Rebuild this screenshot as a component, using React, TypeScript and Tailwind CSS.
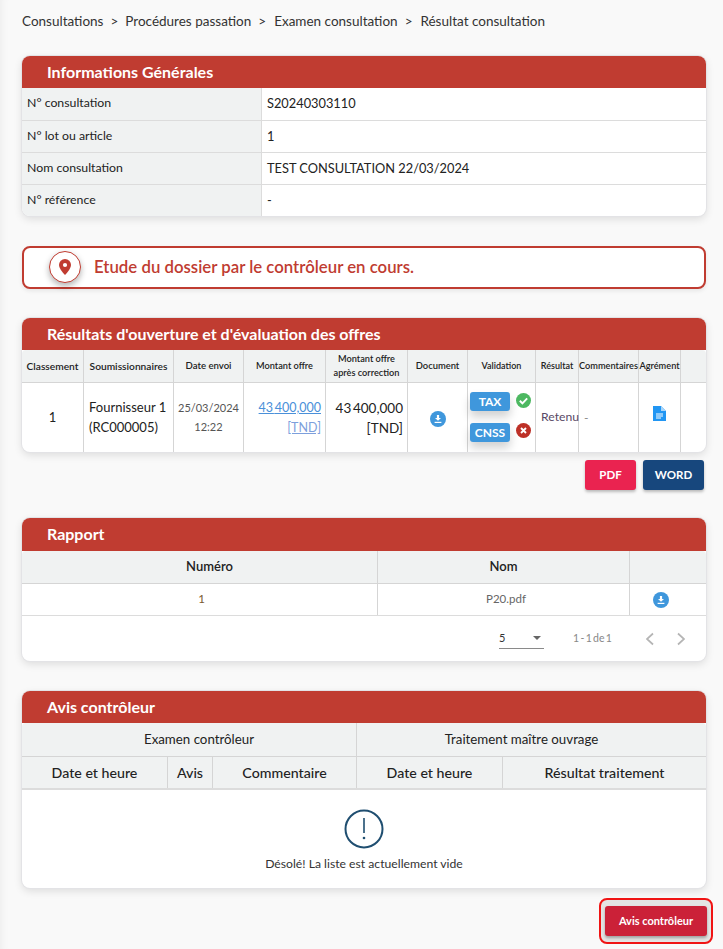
import React from "react";

const font = { fontFamily: "Lato, 'Open Sans', sans-serif" };

function Card({ title, children, className = "", headerClass = "h-[32px]" }: { title: string; children: React.ReactNode; className?: string; headerClass?: string }) {
  return (
    <section className={`rounded-lg bg-white shadow-[0_0_0_1px_#e3e3e6,0_3px_8px_rgba(0,0,0,0.12)] overflow-hidden ${className}`}>
      <h2 className={`${headerClass} bg-[#c03c31] pl-[25px] text-[16px] leading-[32px] font-bold text-white`}>{title}</h2>
      {children}
    </section>
  );
}

function DownloadIcon() {
  return (
    <svg width="16" height="16" viewBox="0 0 16 16" className="inline-block">
      <circle cx="8" cy="8" r="8" fill="#3f97dc" />
      <path d="M6.9 4h2.2v3h1.9L8 9.8 5 7h1.9z" fill="#fff" />
      <rect x="4.6" y="10.8" width="6.8" height="1.2" fill="#fff" />
    </svg>
  );
}

function InfoRow({ label, value, first }: { label: string; value: string; first?: boolean }) {
  return (
    <div className={`grid grid-cols-[240px_1fr] ${first ? "h-[32px]" : "h-[32px] border-t border-[#dcdcdc]"}`}>
      <div className="bg-[#f0f2f2] border-r border-[#dcdcdc] pl-[5px] text-[12.3px] leading-[30px] text-[#222]">{label}</div>
      <div className="pl-[5px] text-[12.8px] leading-[30px] text-[#222]">{value}</div>
    </div>
  );
}

const offerHeaders: [string, number, string][] = [
  ["Classement", 62, "text-[10.2px]"],
  ["Soumissionnaires", 90, "text-[10.2px]"],
  ["Date envoi", 70, "text-[9.6px]"],
  ["Montant offre", 82, "text-[9.2px]"],
  ["Montant offre\naprès correction", 82, "text-[9.2px]"],
  ["Document", 60, "text-[9.4px]"],
  ["Validation", 68, "text-[9px]"],
  ["Résultat", 43, "text-[9px]"],
  ["Commentaires", 60, "text-[9.2px]"],
  ["Agrément", 42, "text-[9.2px]"],
  ["", 25, "text-[9px]"],
];

const cell = "border-r border-[#d5d5d5] h-[69px] text-center";

export default function App() {
  return (
    <div style={font} className="w-[723px] h-[949px] overflow-hidden bg-[#f9f9f9] pl-[22px] pr-[17px] text-[#222] shadow-[inset_10px_0_8px_-8px_rgba(0,0,0,0.05)]">
      <nav className="h-[56px] pt-[13px] text-[13.5px] leading-[17px] text-[#333] flex gap-[7px]">
        <span>Consultations</span><span>&gt;</span><span>Procédures passation</span><span>&gt;</span>
        <span className="ml-[1px]">Examen consultation</span><span>&gt;</span><span className="ml-[1px]">Résultat consultation</span>
      </nav>

      <Card title="Informations Générales">
        <InfoRow first label="N° consultation" value="S20240303110" />
        <InfoRow label="N° lot ou article" value="1" />
        <InfoRow label="Nom consultation" value="TEST CONSULTATION 22/03/2024" />
        <InfoRow label="N° référence" value="-" />
      </Card>

      <div className="mt-[30px] h-[43px] pb-[1px] rounded-lg border-2 border-[#c03c31] bg-white flex items-center pl-[25px] gap-[13px] shadow-[0_2px_4px_rgba(0,0,0,0.08)]">
        <span className="w-[32px] h-[32px] rounded-full bg-white border border-[#c03c31] shadow-[0_3px_6px_rgba(0,0,0,0.3)] flex items-center justify-center">
          <svg width="12" height="16" viewBox="0 0 12 16">
            <path d="M6 0a6 6 0 0 0-6 6c0 4 6 10 6 10s6-6 6-10a6 6 0 0 0-6-6z" fill="#c03c31" />
            <circle cx="6" cy="6" r="2.1" fill="#fff" />
          </svg>
        </span>
        <span className="text-[16.8px] font-semibold text-[#c03c31]">Etude du dossier par le contrôleur en cours.</span>
      </div>

      <Card title="Résultats d'ouverture et d'évaluation des offres" className="mt-[29px]">
        <table className="table-fixed w-full border-separate border-spacing-0">
          <colgroup>
            {offerHeaders.map(([h, w], i) => <col key={i} style={{ width: w }} />)}
          </colgroup>
          <thead>
            <tr>
              {offerHeaders.map(([h, , size], i) => (
                <th key={i} className={`h-[33px] bg-[#f0f2f2] border-b border-[#d5d5d5] first:rounded-tl-[4px] last:rounded-tr-[4px] leading-[14px] font-semibold text-[#222] whitespace-pre-line ${size} ${i < 10 ? "border-r" : ""}`}>
                  {h}
                </th>
              ))}
            </tr>
          </thead>
          <tbody>
            <tr>
              <td className={`${cell} text-[13px]`}>1</td>
              <td className={`${cell} !text-left pl-[5px] pb-[2px] text-[13px] leading-[20px]`}>Fournisseur 1<br />(RC000005)</td>
              <td className={`${cell} pb-[2px] text-[11px] leading-[19px] text-[#555]`}>25/03/2024<br />12:22</td>
              <td className={`${cell} !text-right pr-[4px] text-[12.5px] leading-[20px] text-[#4a90d9]`}><span className="underline">43{"\u2009"}400,000</span><br /><span className="underline text-[#7d9fdc]">[TND]</span></td>
              <td className={`${cell} !text-right pr-[4px] text-[13.5px] leading-[20px]`}>43{"\u2009"}400,000<br />[TND]</td>
              <td className={cell}><DownloadIcon /></td>
              <td className={`${cell} !text-left`}>
                <div className="-translate-y-[1px]">
                  <div className="flex items-center pl-[2px] h-[31px] gap-[6px]">
                    <span className="w-[40px] h-[19px] rounded-[3px] bg-[#3f97dc] text-white text-[12px] font-bold leading-[19px] text-center shadow-[0_6px_10px_rgba(0,0,0,0.18)]">TAX</span>
                    <svg width="15" height="15" viewBox="0 0 15 15" className="-mt-[2px]"><circle cx="7.5" cy="7.5" r="7.5" fill="#4cb861" /><path d="M3.8 7.8l2.6 2.5 4.8-5" stroke="#fff" strokeWidth="1.9" fill="none" /></svg>
                  </div>
                  <div className="flex items-center pl-[2px] h-[31px] gap-[6px]">
                    <span className="w-[40px] h-[19px] rounded-[3px] bg-[#3f97dc] text-white text-[12px] font-bold leading-[19px] text-center shadow-[0_6px_10px_rgba(0,0,0,0.18)]">CNSS</span>
                    <svg width="15" height="15" viewBox="0 0 15 15" className="-mt-[4px]"><circle cx="7.5" cy="7.5" r="7.5" fill="#bd3027" /><path d="M5 5l5 5M10 5l-5 5" stroke="#fff" strokeWidth="1.9" fill="none" /></svg>
                  </div>
                </div>
              </td>
              <td className={`${cell} !text-left pl-[5px] text-[12.2px] text-[#5a4a66] whitespace-nowrap`}>Retenu</td>
              <td className={`${cell} !text-left pl-[5px] text-[12px] text-[#888]`}>-</td>
              <td className={cell}>
                <svg width="13" height="15" viewBox="0 0 13 15" className="block mx-auto -translate-y-[4px]">
                  <path d="M0 0h8l5 5v10H0z" fill="#2196f3" />
                  <path d="M8 0l5 5H8z" fill="#a9d6fa" />
                  <path d="M3 8h7M3 10h7M3 12h5" stroke="#fff" strokeWidth="1" />
                </svg>
              </td>
              <td className="h-[69px]"></td>
            </tr>
          </tbody>
        </table>
      </Card>

      <div className="mt-[8px] mr-[2px] flex justify-end gap-[7px]">
        <button className="w-[51px] h-[30px] rounded-[3px] bg-[#ea2350] text-white text-[11.5px] font-bold shadow-[0_2px_3px_rgba(0,0,0,0.25)]">PDF</button>
        <button className="w-[61px] h-[30px] rounded-[3px] bg-[#17477d] text-white text-[11.5px] font-bold shadow-[0_2px_3px_rgba(0,0,0,0.25)]">WORD</button>
      </div>

      <Card title="Rapport" className="mt-[28px]" headerClass="h-[33px]">
        <div className="grid grid-cols-[356px_252px_1fr] h-[33px] rounded-t-[4px] bg-[#f0f2f2] border-b border-[#d5d5d5] text-[13px] leading-[31px] font-semibold text-center">
          <div className="border-r border-[#d5d5d5] pl-[20px]">Numéro</div>
          <div className="border-r border-[#d5d5d5]">Nom</div>
          <div></div>
        </div>
        <div className="grid grid-cols-[356px_252px_1fr] h-[32px] border-b border-[#dcdcdc] text-[11.5px] leading-[30px] text-center text-[#7a5a30]">
          <div className="border-r border-[#d5d5d5] pl-[4px]">1</div>
          <div className="border-r border-[#d5d5d5] pl-[5px] text-[#666]">P20.pdf</div>
          <div className="flex items-center justify-center pr-[15px]"><DownloadIcon /></div>
        </div>
        <div className="h-[45px] flex items-center justify-end pr-[20px] text-[#888]">
          <div className="w-[45px] h-[21px] border-b border-[#8a8a8a] flex items-center justify-between text-[11px] text-[#333]">
            <span>5</span>
            <span className="mr-[3px] w-0 h-0 border-x-[4px] border-x-transparent border-t-[4px] border-t-[#666]"></span>
          </div>
          <span className="ml-[29px] w-[38px] text-[10.5px] whitespace-nowrap">1{"\u2009"}-{"\u2009"}1{"\u2009"}de{"\u2009"}1</span>
          <svg width="10" height="14" viewBox="0 0 10 14" className="ml-[34px]"><path d="M8 1.5L2 7l6 5.5" stroke="#b5b5b5" strokeWidth="1.7" fill="none" /></svg>
          <svg width="10" height="14" viewBox="0 0 10 14" className="ml-[21px]"><path d="M2 1.5L8 7l-6 5.5" stroke="#b5b5b5" strokeWidth="1.7" fill="none" /></svg>
        </div>
      </Card>

      <Card title="Avis contrôleur" className="mt-[30px]">
        <div className="grid grid-cols-[335px_1fr] h-[34px] rounded-t-[4px] bg-[#f0f2f2] border-b border-[#d5d5d5] text-[13.3px] leading-[32px] text-center">
          <div className="border-r border-[#d5d5d5] pl-[20px]">Examen contrôleur</div>
          <div className="pr-[20px]">Traitement maître ouvrage</div>
        </div>
        <div className="grid grid-cols-[146px_45px_144px_146px_1fr] h-[33px] bg-[#f0f2f2] border-b-2 border-[#dcdcdc] text-[14.2px] leading-[31px] font-medium text-center">
          <div className="border-r border-[#d5d5d5]">Date et heure</div>
          <div className="border-r border-[#d5d5d5]">Avis</div>
          <div className="border-r border-[#d5d5d5]">Commentaire</div>
          <div className="border-r border-[#d5d5d5]">Date et heure</div>
          <div>Résultat traitement</div>
        </div>
        <div className="h-[98px] flex flex-col items-center pt-[19px]">
          <svg width="40" height="40" viewBox="0 0 40 40">
            <circle cx="20" cy="20" r="18.5" fill="none" stroke="#1f4e70" strokeWidth="2" />
            <path d="M20 9v15" stroke="#1f4e70" strokeWidth="1.6" />
            <circle cx="20" cy="29" r="1.3" fill="#1f4e70" />
          </svg>
          <p className="mt-[8px] text-[12.2px] leading-[14px] text-[#333]">Désolé! La liste est actuellement vide</p>
        </div>
      </Card>

      <div className="mt-[10px] -mr-[7px] flex justify-end">
        <div className="rounded-lg border-2 border-[#f01414] bg-[#e4e4e4] px-[4px] py-[6px]">
          <button className="block w-[102px] h-[30px] rounded-[3px] bg-[#cb2138] text-white text-[11px] font-bold shadow-[0_2px_3px_rgba(0,0,0,0.3)]">Avis contrôleur</button>
        </div>
      </div>
    </div>
  );
}
